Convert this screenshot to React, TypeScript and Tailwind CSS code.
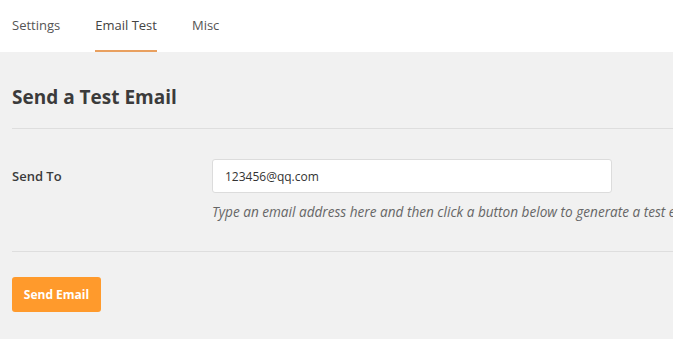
export default function App() {
  const tabs = ['Settings', 'Email Test', 'Misc'];
  const active = 'Email Test';

  return (
    <div className="h-[339px] w-[673px] overflow-hidden bg-[#f1f1f1] font-['Open_Sans',sans-serif] text-[#3c434a]">
      <nav className="flex h-[52px] items-stretch gap-[35px] bg-white px-3">
        {tabs.map((t) => (
          <div
            key={t}
            className={`flex items-center border-b-2 pt-px text-[13px] ${
              t === active ? 'border-[#e9a05f] text-[#444]' : 'border-transparent text-[#555]'
            }`}
          >
            {t}
          </div>
        ))}
      </nav>

      <div className="pl-3">
        <h2 className="flex h-[77px] items-center border-b border-[#dedede] pt-[14px] text-[19px] font-bold text-[#3b3b3b]">
          Send a Test Email
        </h2>

        <div className="flex border-b border-[#dedede] pb-[29px] pt-[30px]">
          <label className="w-[200px] shrink-0 pt-[8px] text-[13px] font-semibold text-[#3b3b3b]">Send To</label>
          <div className="min-w-0 flex-1">
            <input
              type="text"
              defaultValue="123456@qq.com"
              className="h-[34px] w-[400px] rounded-[3px] border border-[#dcdcdc] bg-white px-3 text-[12px] text-[#333] outline-none"
            />
            <p className="mt-[9px] whitespace-nowrap text-[13.6px] italic text-[#666]">
              Type an email address here and then click a button below to generate a test email.
            </p>
          </div>
        </div>

        <div className="pt-[25px]">
          <button className="h-[35px] w-[89px] rounded-[3px] bg-[#ff9a2c] text-[12px] font-bold text-white">
            Send Email
          </button>
        </div>
      </div>
    </div>
  );
}
